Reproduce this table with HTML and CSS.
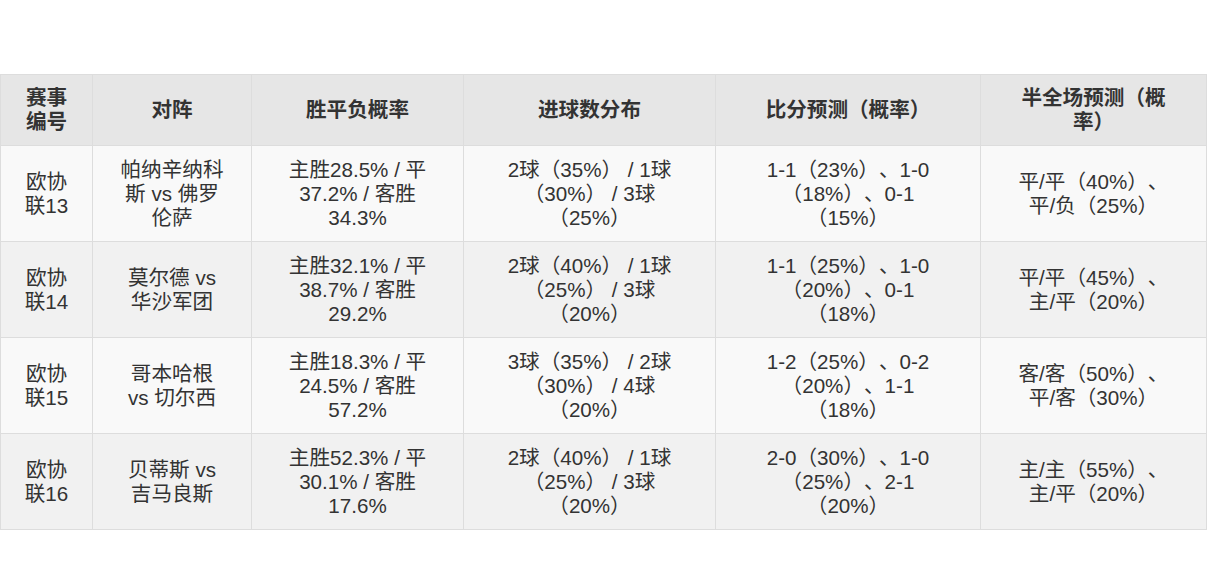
FILE: index.html
```html
<!DOCTYPE html>
<html lang="zh-CN">
<head>
<meta charset="utf-8">
<title>欧协联预测</title>
<link rel="stylesheet" href="styles.css">
</head>
<body>
<div class="page">
  <table class="pred">
    <colgroup>
      <col class="c1"><col class="c2"><col class="c3"><col class="c4"><col class="c5"><col class="c6">
    </colgroup>
    <thead>
      <tr>
        <th>赛事编号</th>
        <th>对阵</th>
        <th>胜平负概率</th>
        <th>进球数分布</th>
        <th>比分预测（概率）</th>
        <th>半全场预测（概率）</th>
      </tr>
    </thead>
    <tbody>
      <tr>
        <td>欧协联13</td>
        <td>帕纳辛纳科斯 vs 佛罗伦萨</td>
        <td>主胜28.5% / 平37.2% / 客胜34.3%</td>
        <td>2球（35%） / 1球（30%） / 3球（25%）</td>
        <td>1-1（23%）、1-0（18%）、0-1（15%）</td>
        <td>平/平（40%）、平/负（25%）</td>
      </tr>
      <tr>
        <td>欧协联14</td>
        <td>莫尔德 vs 华沙军团</td>
        <td>主胜32.1% / 平38.7% / 客胜29.2%</td>
        <td>2球（40%） / 1球（25%） / 3球（20%）</td>
        <td>1-1（25%）、1-0（20%）、0-1（18%）</td>
        <td>平/平（45%）、主/平（20%）</td>
      </tr>
      <tr>
        <td>欧协联15</td>
        <td>哥本哈根 vs 切尔西</td>
        <td>主胜18.3% / 平24.5% / 客胜57.2%</td>
        <td>3球（35%） / 2球（30%） / 4球（20%）</td>
        <td>1-2（25%）、0-2（20%）、1-1（18%）</td>
        <td>客/客（50%）、平/客（30%）</td>
      </tr>
      <tr>
        <td>欧协联16</td>
        <td>贝蒂斯 vs 吉马良斯</td>
        <td>主胜52.3% / 平30.1% / 客胜17.6%</td>
        <td>2球（40%） / 1球（25%） / 3球（20%）</td>
        <td>2-0（30%）、1-0（25%）、2-1（20%）</td>
        <td>主/主（55%）、主/平（20%）</td>
      </tr>
    </tbody>
  </table>
</div>
</body>
</html>
```

FILE: styles.css
```css
html, body {
  margin: 0;
  padding: 0;
  background: #ffffff;
}

.page {
  padding-top: 74px;
}

.pred {
  width: 1206px;
  table-layout: fixed;
  border-collapse: collapse;
  border: 1px solid #dddddd;
  font-family: "Liberation Sans", Arial, "Noto Sans CJK SC", sans-serif;
  font-size: 20.6px;
  line-height: 24px;
  color: #333333;
  text-spacing-trim: space-all;
}

.c1 { width: 92px; }
.c2 { width: 159px; }
.c3 { width: 212px; }
.c4 { width: 252px; }
.c5 { width: 265px; }
.c6 { width: 226px; }

.pred th,
.pred td {
  border: 1px solid #dddddd;
  text-align: center;
  vertical-align: middle;
  padding-left: 25px;
  padding-right: 25px;
}

.pred th {
  padding-top: 11px;
  padding-bottom: 11px;
  background: #e6e6e6;
  font-weight: bold;
  color: #333333;
}

.pred td {
  padding-top: 11.5px;
  padding-bottom: 11.5px;
}

.pred th:nth-child(1),
.pred td:nth-child(1) {
  padding-left: 20px;
  padding-right: 20px;
}

.pred th:nth-child(2),
.pred td:nth-child(2) {
  padding-left: 26px;
  padding-right: 26px;
}

.pred th:nth-child(5),
.pred td:nth-child(5),
.pred th:nth-child(6),
.pred td:nth-child(6) {
  padding-left: 30px;
  padding-right: 30px;
}

.pred tbody tr:nth-child(odd) td {
  background: #f9f9f9;
}

.pred tbody tr:nth-child(even) td {
  background: #f1f1f1;
}
```
